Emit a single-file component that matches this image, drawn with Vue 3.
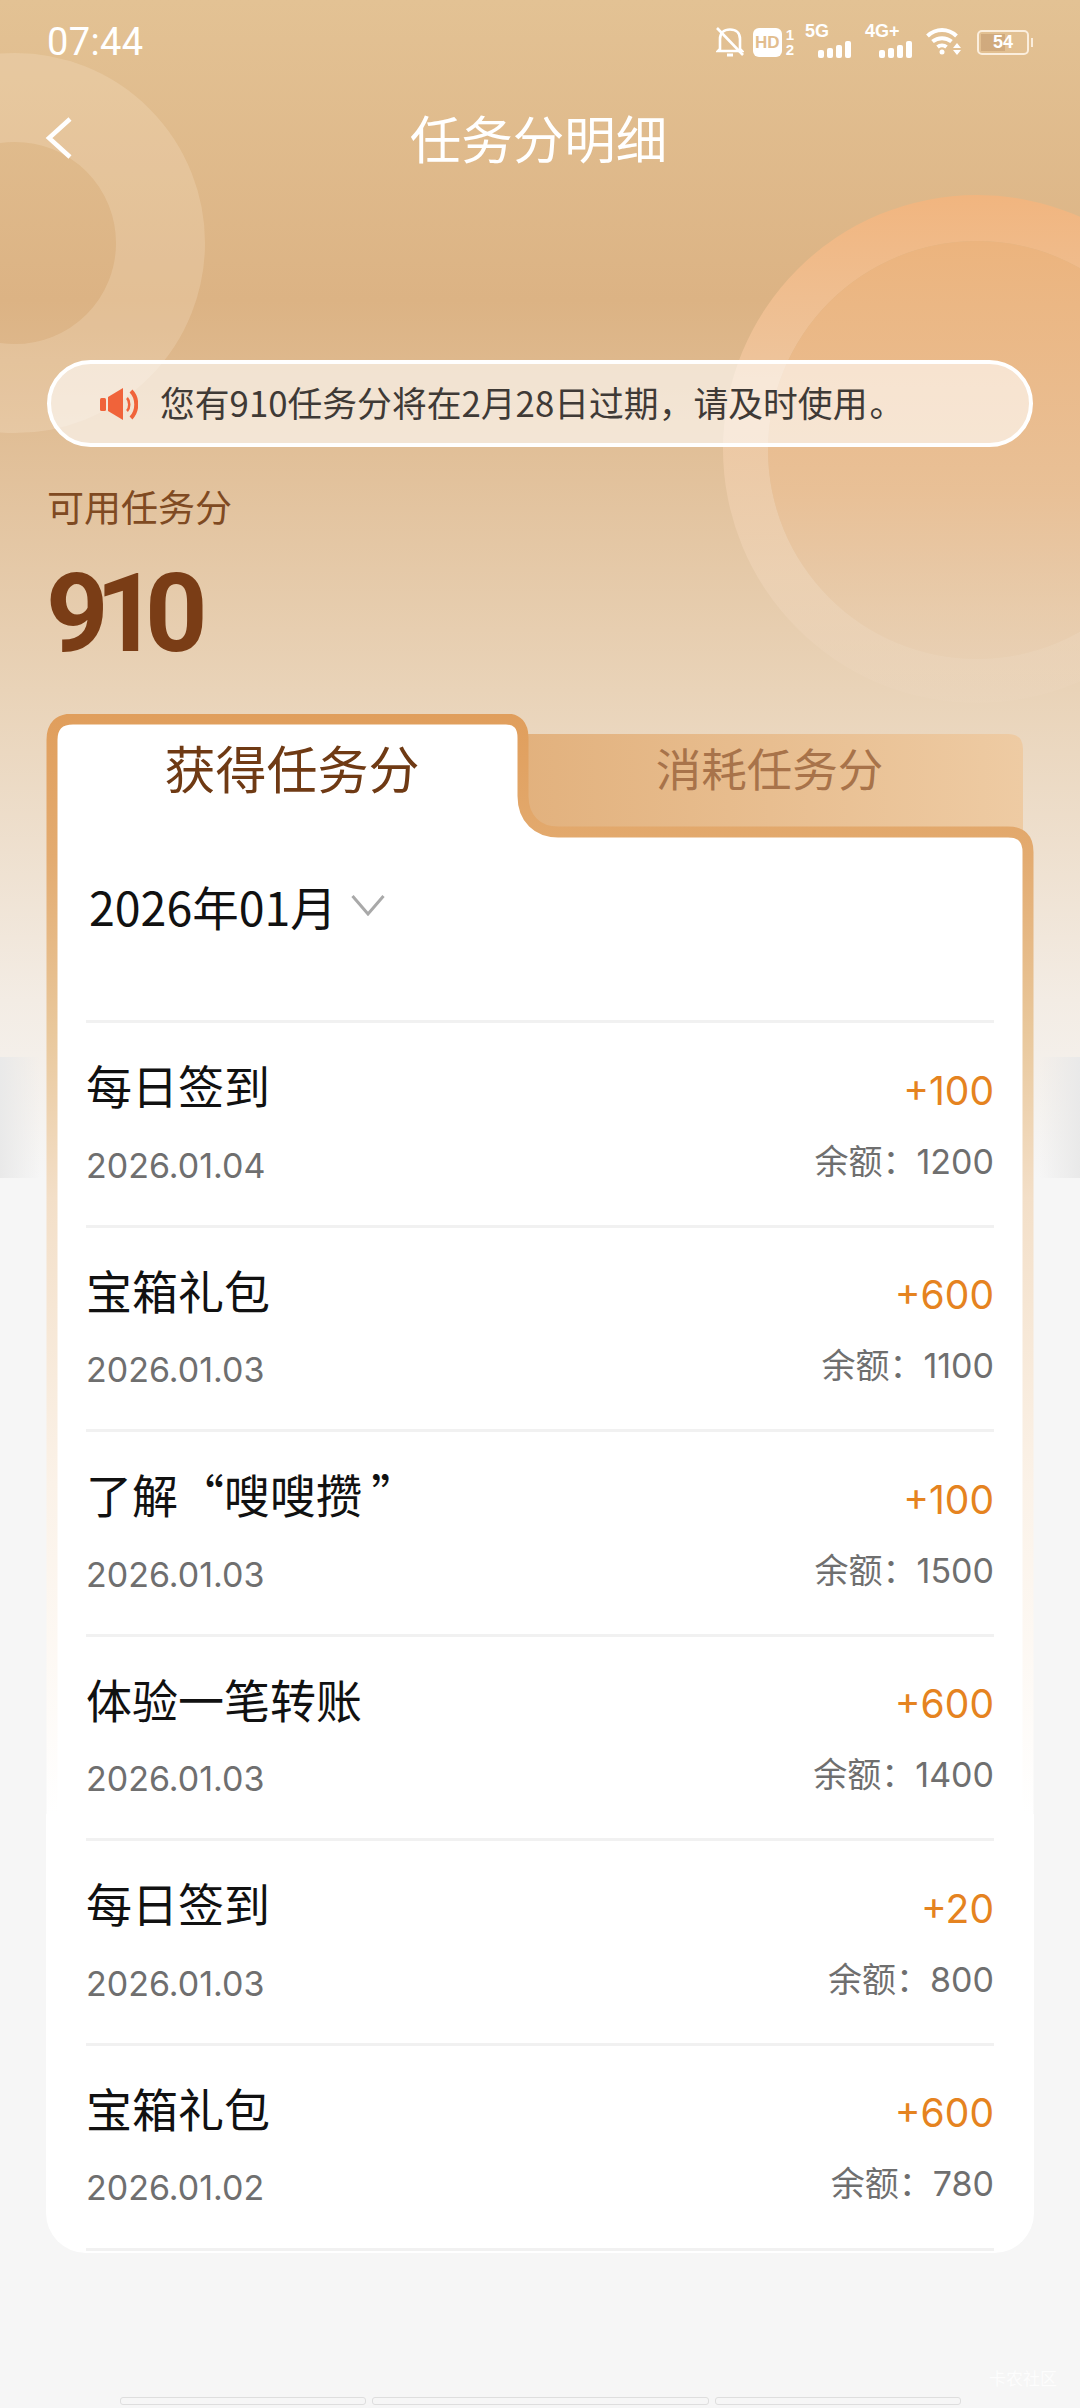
<script setup>
const rows = [
  { title: '每日签到', date: '2026.01.04', amount: '+100', balance: '1200' },
  { title: '宝箱礼包', date: '2026.01.03', amount: '+600', balance: '1100' },
  { title: '了解“嗖嗖攒\u2009”', date: '2026.01.03', amount: '+100', balance: '1500' },
  { title: '体验一笔转账', date: '2026.01.03', amount: '+600', balance: '1400' },
  { title: '每日签到', date: '2026.01.03', amount: '+20', balance: '800' },
  { title: '宝箱礼包', date: '2026.01.02', amount: '+600', balance: '780' }
]
</script>

<template>
  <div class="page">
    <div class="ring-left"></div>
    <svg class="ring-right" width="508" height="508" viewBox="0 0 508 508">
      <defs>
        <linearGradient id="ringOuter" x1="0" y1="0" x2="0" y2="1">
          <stop offset="0" stop-color="#f1b57f" />
          <stop offset="0.4" stop-color="#efc8a2" stop-opacity="0.9" />
          <stop offset="0.75" stop-color="#eed3b6" stop-opacity="0.7" />
          <stop offset="1" stop-color="#eed9c3" stop-opacity="0.15" />
        </linearGradient>
        <linearGradient id="ringInner" x1="0" y1="0" x2="0" y2="1">
          <stop offset="0" stop-color="#ecb47e" />
          <stop offset="0.6" stop-color="#e9c096" stop-opacity="0.95" />
          <stop offset="1" stop-color="#e9cfb2" stop-opacity="0.5" />
        </linearGradient>
      </defs>
      <path
        fill="url(#ringOuter)"
        fill-rule="evenodd"
        d="M254 0 A254 254 0 1 1 254 508 A254 254 0 1 1 254 0 Z M254 46 A209 209 0 1 0 254 464 A209 209 0 1 0 254 46 Z"
      />
      <circle cx="254" cy="255" r="209" fill="url(#ringInner)" />
    </svg>
    <div class="band band-left"></div>
    <div class="band band-right"></div>

    <div class="status">
      <span class="time">07:44</span>
      <div class="status-icons">
        <svg class="bell" width="28" height="32" viewBox="0 0 28 32" fill="none" stroke="#fff" stroke-width="2.6">
          <path d="M4 23 V13 C4 7 8 3.500 14 3.500 C20 3.500 24 7 24 13 V23 L26 25 H2 Z" />
          <path d="M11 29 H17" stroke-width="3" />
          <path d="M1 2 L27 29" />
        </svg>
        <span class="hd">HD</span>
        <span class="sim"><i>1</i><i>2</i></span>
        <span class="signal signal-5g">
          <b>5G</b>
          <span class="bars"><i class="b1"></i><i class="b2"></i><i class="b3"></i><i class="b4"></i></span>
        </span>
        <span class="signal signal-4g">
          <b>4G+</b>
          <span class="bars"><i class="b1"></i><i class="b2"></i><i class="b3"></i><i class="b4"></i></span>
        </span>
        <svg class="wifi" width="36" height="28" viewBox="0 0 36 28" fill="none" stroke="#fff" stroke-width="4">
          <path d="M1.500 8 C10 0 22 0 30.500 8" />
          <path d="M6.500 13.500 C12 9 20 9 25.500 13.500" />
          <path d="M11.500 19 C14 17 18 17 20.500 19" />
          <circle cx="16" cy="24" r="2.500" fill="#fff" stroke="none" />
          <path d="M31 15 L35 20 H27 Z M27 22 H35 L31 27 Z" fill="#fff" stroke="none" />
        </svg>
        <span class="battery"><span class="level"></span><em>54</em></span>
      </div>
    </div>

    <div class="nav">
      <svg class="back" width="28" height="44" viewBox="0 0 28 44" fill="none" stroke="#fff" stroke-width="4.500">
        <path d="M25 3 L4 22 L25 41" />
      </svg>
      <span class="nav-title">任务分明细</span>
    </div>

    <div class="notice">
      <svg class="horn" width="38" height="32" viewBox="0 0 38 32">
        <rect x="0" y="10" width="6" height="13" rx="1.500" fill="#f0633a" />
        <path d="M8 9 L23 0 V32 L8 23 Z" fill="#f0633a" />
        <path d="M27 10 C30 13 30 20 27 23" fill="none" stroke="#f0633a" stroke-width="2.500" />
        <path d="M31 3 C38 10 38 23 31 30" fill="none" stroke="#f0633a" stroke-width="4" />
      </svg>
      <span>您有910任务分将在2月28日过期，请及时使用&#8202;。</span>
    </div>

    <div class="label">可用任务分</div>
    <div class="total">910</div>

    <div class="card">
      <svg class="frame" width="988" height="1539" viewBox="0 0 988 1539" fill="none">
        <defs>
          <linearGradient id="edge" gradientUnits="userSpaceOnUse" x1="0" y1="0" x2="0" y2="1100">
            <stop offset="0" stop-color="#e09e5c" />
            <stop offset="0.13" stop-color="#e3ab70" />
            <stop offset="0.29" stop-color="#e9c89c" />
            <stop offset="0.44" stop-color="#f3dfc8" />
            <stop offset="0.7" stop-color="#fbf2e8" />
            <stop offset="1" stop-color="#fff" />
          </linearGradient>
          <linearGradient id="idle" x1="0" y1="0" x2="1" y2="0">
            <stop offset="0" stop-color="#e2b17d" />
            <stop offset="1" stop-color="#eecba3" />
          </linearGradient>
        </defs>
        <path d="M470 20 H962 Q977 20 977 35 V118 H470 Z" fill="url(#idle)" />
        <path
          d="M0 1539 V1100 H6 V26 Q6 5 27 5 H460 Q477 5 477 24 V82 C477 105 492 118 512 118 H962 Q982 118 982 138 V1100 H988 V1539 Z"
          fill="#fff"
        />
        <path
          d="M6 1100 V26 Q6 5 27 5 H460 Q477 5 477 24 V82 C477 105 492 118 512 118 H962 Q982 118 982 138 V1100"
          stroke="url(#edge)"
          stroke-width="11"
        />
      </svg>

      <div class="tabs">
        <div class="tab tab-on">获得任务分</div>
        <div class="tab tab-off">消耗任务分</div>
      </div>

      <div class="month">
        <span>2026年01月</span>
        <svg width="34" height="22" viewBox="0 0 34 22" fill="none" stroke="#a9a9a9" stroke-width="3">
          <path d="M1.500 2 L17 20 L32.500 2" />
        </svg>
      </div>

      <div v-for="(row, i) in rows" :key="i" class="row">
        <div class="row-top">
          <span class="row-title">{{ row.title }}</span>
          <span class="row-amount">{{ row.amount }}</span>
        </div>
        <div class="row-bottom">
          <span class="row-date">{{ row.date }}</span>
          <span class="row-balance">余额：{{ row.balance }}</span>
        </div>
      </div>
    </div>

    <div class="handle">
      <span class="seg seg-a"></span>
      <span class="seg seg-b"></span>
      <span class="seg seg-c"></span>
    </div>
    <span class="mark">卡农社区</span>
  </div>
</template>

<style scoped>
.page {
  position: relative;
  width: 1080px;
  height: 2408px;
  overflow: hidden;
  font-family: "Noto Sans CJK SC", "Noto Sans", sans-serif;
  background: linear-gradient(180deg, #e3c294 0, #dcb384 300px, #e9d3b8 690px, #f3ece4 1000px, #f6f6f6 1180px);
}
.ring-left {
  position: absolute;
  left: -175px;
  top: 53px;
  width: 380px;
  height: 380px;
  box-sizing: border-box;
  border-radius: 50%;
  border: 89px solid rgba(255, 240, 220, 0.2);
}
.ring-right {
  position: absolute;
  left: 723px;
  top: 195px;
}
.band {
  position: absolute;
  top: 1057px;
  width: 40px;
  height: 121px;
}
.band-left {
  left: 0;
  background: linear-gradient(90deg, #e9e9e9, rgba(243, 243, 243, 0));
}
.band-right {
  right: 0;
  background: linear-gradient(270deg, #e9e9e9, rgba(243, 243, 243, 0));
}
.status {
  position: relative;
  display: flex;
  justify-content: space-between;
  align-items: center;
  height: 84px;
  padding: 0 51px 0 47px;
  color: #fff;
}
.time {
  font-family: Roboto, sans-serif;
  font-size: 38px;
  letter-spacing: 0.4px;
}
.status-icons {
  display: flex;
  align-items: center;
  height: 36px;
}
.hd {
  width: 29px;
  height: 29px;
  margin-left: 9px;
  border-radius: 6px;
  background: #fff;
  color: #e2bd8e;
  font: 700 17px/29px "Liberation Sans", sans-serif;
  text-align: center;
}
.sim {
  display: flex;
  flex-direction: column;
  margin-left: 4px;
  font: 700 15px/15px "Liberation Sans", sans-serif;
}
.sim i {
  font-style: normal;
}
.signal {
  position: relative;
  display: flex;
  align-items: flex-end;
  height: 32px;
}
.signal b {
  position: absolute;
  left: 0;
  top: -4px;
  font: 700 18px/18px "Liberation Sans", sans-serif;
  white-space: nowrap;
}
.signal-5g {
  margin-left: 11px;
  width: 46px;
  justify-content: flex-end;
}
.signal-4g {
  margin-left: 14px;
  width: 47px;
  justify-content: flex-end;
}
.bars {
  display: flex;
  align-items: flex-end;
  gap: 3px;
}
.bars i {
  width: 6px;
  border-radius: 2px;
  background: #fff;
}
.b1 { height: 8px; }
.b2 { height: 10px; }
.b3 { height: 13px; }
.b4 { height: 17px; }
.wifi {
  margin-left: 14px;
}
.battery {
  position: relative;
  display: block;
  width: 52px;
  height: 25px;
  margin-left: 15px;
  box-sizing: border-box;
  border: 2px solid #fbeedd;
  border-radius: 5px;
}
.battery::after {
  content: "";
  position: absolute;
  right: -6px;
  top: 6px;
  width: 2px;
  height: 9px;
  background: #fbeedd;
}
.level {
  position: absolute;
  left: 2px;
  top: 2px;
  bottom: 2px;
  width: 24px;
  background: rgba(165, 120, 80, 0.3);
}
.battery em {
  position: absolute;
  left: 0;
  right: 0;
  top: 0;
  font: 700 18px/21px "Liberation Sans", sans-serif;
  text-align: center;
}
.nav {
  position: relative;
  display: flex;
  align-items: center;
  justify-content: center;
  height: 108px;
  padding: 0 3px 3px 0;
  box-sizing: border-box;
}
.back {
  position: absolute;
  left: 45px;
  top: 32px;
}
.nav-title {
  color: #fff;
  font-size: 51.500px;
  line-height: 1;
}
.notice {
  position: relative;
  display: flex;
  align-items: center;
  box-sizing: border-box;
  height: 87px;
  margin: 168px 47px 0;
  padding: 0 0 4px 49px;
  gap: 22px;
  border: 4px solid #fff;
  border-radius: 44px;
  background: rgba(255, 255, 255, 0.6);
  color: #3f3a36;
  font-size: 34.800px;
}
.horn {
  margin-top: 4px;
}
.label {
  position: relative;
  margin: 35px 0 0 47px;
  color: #7f4a22;
  font-size: 37px;
  line-height: 48px;
}
.total {
  position: relative;
  margin: 30px 0 46px 46px;
  color: #7a3d16;
  font-family: Roboto, sans-serif;
  font-weight: 700;
  font-size: 109px;
  line-height: 108px;
  letter-spacing: -13px;
}
.card {
  position: relative;
  box-sizing: border-box;
  width: 988px;
  height: 1539px;
  margin: 0 0 0 46px;
  border-radius: 0 0 40px 40px;
  overflow: hidden;
}
.frame {
  position: absolute;
  left: 0;
  top: 0;
}
.tabs {
  position: relative;
  display: flex;
  height: 110px;
}
.tab {
  text-align: center;
}
.tab-on {
  width: 492px;
  padding-top: 17px;
  color: #6f3a14;
  font-size: 51px;
  line-height: 72px;
}
.tab-off {
  width: 463px;
  padding-top: 17px;
  color: #a8734a;
  font-size: 45.500px;
  line-height: 72px;
}
.month {
  position: relative;
  display: flex;
  align-items: center;
  gap: 14px;
  height: 100px;
  margin: 31px 0 65px;
  padding-left: 43px;
  color: #111;
  font-size: 46.500px;
}
.row {
  position: relative;
  box-sizing: border-box;
  height: 204.600px;
  margin: 0 40px 0 40px;
  padding-top: 28px;
  border-top: 3px solid #f1f1f1;
}
.row:last-child {
  height: 207.600px;
  border-bottom: 3px solid #f1f1f1;
}
.row-top,
.row-bottom {
  display: flex;
  justify-content: space-between;
}
.row-top {
  align-items: center;
  height: 66px;
}
.row-bottom {
  align-items: center;
  height: 60px;
  margin-top: 12px;
}
.row-title {
  color: #111;
  font-size: 46px;
}
.row-amount {
  position: relative;
  top: 6px;
  color: #e58320;
  font-family: Inter, "Noto Sans CJK SC", sans-serif;
  font-size: 39px;
}
.row-date {
  position: relative;
  top: 6px;
  color: #6f6f6f;
  font-family: Inter, "Noto Sans CJK SC", sans-serif;
  font-size: 34px;
}
.row-balance {
  position: relative;
  top: 0;
  color: #6f6f6f;
  font-family: Inter, "Noto Sans CJK SC", sans-serif;
  font-size: 34px;
}
.handle {
  position: absolute;
  left: 120px;
  bottom: 3px;
  display: flex;
  gap: 6px;
}
.seg {
  box-sizing: border-box;
  height: 8px;
  border: 1.500px solid #dedede;
  border-radius: 3px;
}
.seg-a { width: 246px; }
.seg-b { width: 337px; }
.seg-c { width: 246px; }
.mark {
  position: absolute;
  right: 23px;
  bottom: 18px;
  color: #fff;
  font-size: 17px;
  opacity: 0.8;
}
</style>
<style>
body {
  background: #f6f6f6;
}
</style>
